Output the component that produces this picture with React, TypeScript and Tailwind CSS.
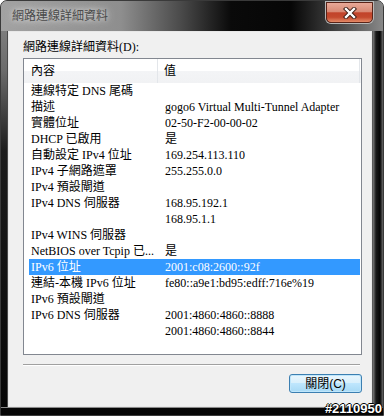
import React from 'react';

const rows: [string, string][] = [
    ['連線特定 DNS 尾碼', ''],
    ['描述', 'gogo6 Virtual Multi-Tunnel Adapter'],
    ['實體位址', '02-50-F2-00-00-02'],
    ['DHCP 已啟用', '是'],
    ['自動設定 IPv4 位址', '169.254.113.110'],
    ['IPv4 子網路遮罩', '255.255.0.0'],
    ['IPv4 預設閘道', ''],
    ['IPv4 DNS 伺服器', '168.95.192.1'],
    ['', '168.95.1.1'],
    ['IPv4 WINS 伺服器', ''],
    ['NetBIOS over Tcpip 已...', '是'],
    ['IPv6 位址', '2001:c08:2600::92f'],
    ['連結-本機 IPv6 位址', 'fe80::a9e1:bd95:edff:716e%19'],
    ['IPv6 預設閘道', ''],
    ['IPv6 DNS 伺服器', '2001:4860:4860::8888'],
    ['', '2001:4860:4860::8844'],
];

const selected = 11;

const CloseX = () => (
    <svg width="14" height="12" viewBox="0 0 14 12">
        <path d="M3 2 L11 10 M11 2 L3 10" stroke="#3a1a12" strokeWidth="4.2" strokeLinecap="square" />
        <path d="M3 2 L11 10 M11 2 L3 10" stroke="#ffffff" strokeWidth="2.4" strokeLinecap="square" />
    </svg>
);

export default function App() {
    return (
        <div className="relative flex h-[416px] w-[384px] flex-col overflow-hidden rounded-t-[7px] border border-[#3a3a3a] bg-[linear-gradient(to_bottom,#8c8c8c_0px,#6a6a6a_70px,#1c1c1c_150px,#060606)] font-['Liberation_Serif','Noto_Sans_CJK_TC',serif] text-[12px] text-black">
            {/* Title bar */}
            <div className="flex h-[30px] shrink-0 items-start justify-between bg-[linear-gradient(to_right,#a2a2a2_0px,#8e8e8e_120px,#4a4a4a_180px,#0a0a0a_230px,#060606_290px,#3c3c3c_330px,#8a8a8a_383px)]">
                <span className="pt-[6px] pl-[11px] font-['Noto_Sans_CJK_TC',sans-serif] text-[12px] leading-[16px] text-[#4a4a4a] [text-shadow:0_0_8px_#dcdcdc,0_0_5px_#cfcfcf]">
                    網路連線詳細資料
                </span>
                <div className="mt-[1px] mr-[10px] flex h-[21px] w-[47px] items-center justify-center rounded-b-[5px] border border-[#5a2418] bg-[linear-gradient(to_bottom,#e9a998_0%,#d98a75_45%,#c2432a_52%,#c44a2e_75%,#e58b68_100%)] shadow-[0_0_0_1px_#b8b8b8]">
                    <CloseX />
                </div>
            </div>

            {/* Frame sides + client area */}
            <div className="flex flex-1">
                <div className="w-[7px] shrink-0 border-r border-[#4a4a4a]" />
                <div className="flex flex-1 flex-col border border-[#e8e8e8] bg-[#f0f0f0] pt-[7px] pr-[9px] pl-[14px]">
                    <div className="leading-[16px]">網路連線詳細資料(D):</div>

                    <div className="mt-[3px] flex h-[297px] flex-col border border-[#828790] bg-white">
                        {/* Header */}
                        <div className="flex h-[24px] shrink-0 bg-[linear-gradient(to_bottom,#ffffff_0%,#ffffff_50%,#f3f4f6_51%,#f1f2f4_100%)]">
                            <div className="flex w-[134px] items-center border-r border-[#e3e6ea] pl-[7px]">內容</div>
                            <div className="flex w-[202px] items-center border-r border-[#e3e6ea] pl-[6px]">值</div>
                        </div>
                        {rows.map(([k, v], i) => (
                            <div
                                key={i}
                                className={
                                    i === selected
                                        ? 'mr-[1px] ml-[5px] flex h-[16px] items-center bg-[#3399ff] leading-[16px] text-white'
                                        : 'mr-[1px] ml-[5px] flex h-[16px] items-center leading-[16px]'
                                }
                            >
                                <div className="w-[136px] shrink-0 overflow-hidden pl-[2px] whitespace-nowrap">{k}</div>
                                <div className="whitespace-nowrap">{v}</div>
                            </div>
                        ))}
                    </div>

                    {/* Separator */}
                    <div className="mt-[9px] mr-[2px] h-[2px] border-t border-b border-t-[#a0a0a0] border-b-white" />

                    <div className="mt-[8px] flex justify-end">
                        <button className="flex h-[19px] w-[73px] items-center justify-center rounded-[3px] border border-[#3c7fb1] bg-[linear-gradient(to_bottom,#eaf6fd_0%,#d9f0fc_45%,#bee6fd_50%,#a7d9f5_100%)] font-['Liberation_Sans','Noto_Sans_CJK_TC',sans-serif] text-[12px] leading-none text-black shadow-[inset_0_0_0_1px_#bfe6fb]">
                            關閉(C)
                        </button>
                    </div>
                </div>
                <div className="w-[11px] shrink-0 border-l border-[#5a5a5a] bg-[linear-gradient(to_right,#7a7a7a_0px,#1a1a1a_3px,#050505_7px,#6a6a6a_10px)]" />
            </div>
            <div className="h-[8px] shrink-0 border-t border-[#8a8a8a]" />

            {/* Watermark */}
            <span className="absolute right-[1px] bottom-[-2px] font-['Liberation_Sans',sans-serif] text-[13px] leading-[16px] font-bold text-white [text-shadow:1px_0_0_#000,-1px_0_0_#000,0_1px_0_#000,0_-1px_0_#000]">
                #2110950
            </span>
        </div>
    );
}
